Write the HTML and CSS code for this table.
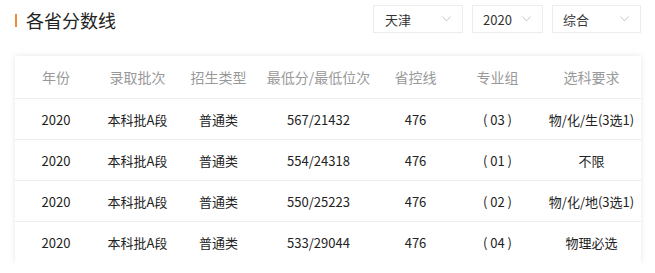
FILE: index.html
```html
<!DOCTYPE html>
<html lang="zh">
<head>
<meta charset="utf-8">
<title>各省分数线</title>
<link rel="stylesheet" href="styles.css">
</head>
<body>
<div class="topbar">
  <h2 class="title"><span class="bar"></span>各省分数线</h2>
  <div class="filters">
    <div class="select w-prov"><span>天津</span><svg class="chev" width="9" height="6" viewBox="0 0 9 6"><path d="M0.5 0.5 L4.5 5 L8.5 0.5" fill="none" stroke="#c8c8c8" stroke-width="1"/></svg></div>
    <div class="select w-year"><span>2020</span><svg class="chev" width="9" height="6" viewBox="0 0 9 6"><path d="M0.5 0.5 L4.5 5 L8.5 0.5" fill="none" stroke="#c8c8c8" stroke-width="1"/></svg></div>
    <div class="select w-type"><span>综合</span><svg class="chev" width="9" height="6" viewBox="0 0 9 6"><path d="M0.5 0.5 L4.5 5 L8.5 0.5" fill="none" stroke="#c8c8c8" stroke-width="1"/></svg></div>
  </div>
</div>
<div class="card">
  <div class="row head">
    <div>年份</div><div>录取批次</div><div>招生类型</div><div>最低分/最低位次</div><div>省控线</div><div>专业组</div><div>选科要求</div>
  </div>
  <div class="row">
    <div>2020</div><div>本科批A段</div><div>普通类</div><div>567/21432</div><div>476</div><div>( 03 )</div><div>物/化/生(3选1)</div>
  </div>
  <div class="row">
    <div>2020</div><div>本科批A段</div><div>普通类</div><div>554/24318</div><div>476</div><div>( 01 )</div><div>不限</div>
  </div>
  <div class="row">
    <div>2020</div><div>本科批A段</div><div>普通类</div><div>550/25223</div><div>476</div><div>( 02 )</div><div>物/化/地(3选1)</div>
  </div>
  <div class="row last">
    <div>2020</div><div>本科批A段</div><div>普通类</div><div>533/29044</div><div>476</div><div>( 04 )</div><div>物理必选</div>
  </div>
</div>
</body>
</html>
```
FILE: styles.css
```css
* { box-sizing: border-box; }
body {
  margin: 0;
  background: #fff;
  font-family: "Noto Sans CJK SC", "Noto Sans", sans-serif;
  color: #333;
}
.topbar {
  display: flex;
  align-items: flex-start;
  justify-content: space-between;
  padding: 5px 14px 0 15px;
}
.title {
  margin: 0;
  display: flex;
  align-items: center;
  font-size: 18px;
  font-weight: normal;
  color: #222;
  line-height: 26px;
  margin-top: 2px;
}
.bar {
  width: 2px;
  height: 13px;
  background: #ef8a3a;
  margin-right: 9px;
}
.filters {
  display: flex;
  gap: 9px;
}
.select {
  height: 28px;
  border: 1px solid #ececec;
  display: flex;
  align-items: center;
  justify-content: space-between;
  padding: 0 11px 0 11px;
  font-size: 13px;
  color: #333;
}
.w-prov { width: 90px; }
.w-year { width: 71px; padding-left: 10px; }
.w-type { width: 89px; padding-left: 10px; }
.chev { display: block; }
.card {
  margin: 23px 14px 0 15px;
  background: #fff;
  box-shadow: 0 0 6px rgba(0, 0, 0, 0.1);
}
.row {
  display: grid;
  grid-template-columns: 82px 81px 81px 119px 75px 89px 1fr;
  height: 41px;
  align-items: center;
  border-bottom: 1px solid #ececec;
  font-size: 13px;
  color: #222;
}
.row > div { text-align: center; white-space: nowrap; }
.row.head {
  height: 43px;
  font-size: 14px;
  color: #999;
}
.row.last { border-bottom: none; }
```
